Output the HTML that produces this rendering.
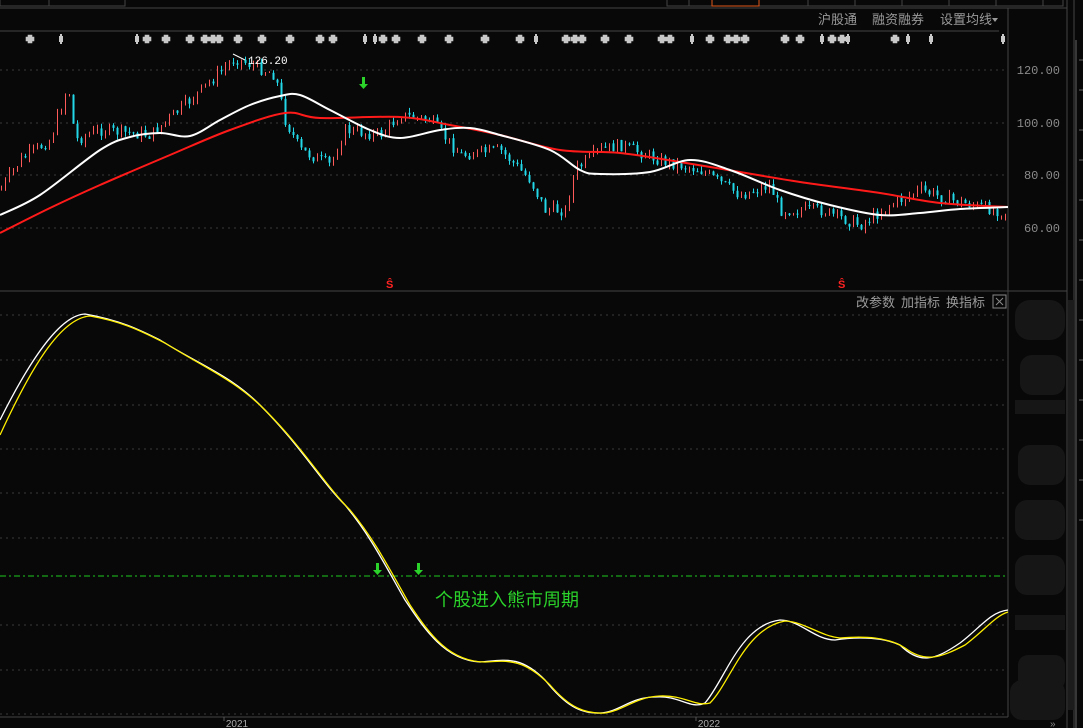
<!DOCTYPE html>
<html><head><meta charset="utf-8"><style>
body{margin:0;background:#080808;width:1083px;height:728px;overflow:hidden;font-family:"Liberation Sans","Noto Sans CJK SC",sans-serif;}
svg{display:block}
</style></head><body>
<svg id="s" width="1083" height="728" xmlns="http://www.w3.org/2000/svg">
<rect width="1083" height="728" fill="#080808"/>
<g stroke="#444" fill="none">
<line x1="0" y1="8" x2="1067" y2="8"/>
<rect x="0" y="-2" width="125" height="8"/>
<line x1="49" y1="0" x2="49" y2="6"/>
<rect x="667" y="-2" width="396" height="8"/>
<line x1="689" y1="0" x2="689" y2="6"/><line x1="808" y1="0" x2="808" y2="6"/><line x1="855" y1="0" x2="855" y2="6"/><line x1="902" y1="0" x2="902" y2="6"/><line x1="949" y1="0" x2="949" y2="6"/><line x1="996" y1="0" x2="996" y2="6"/><line x1="1043" y1="0" x2="1043" y2="6"/>
<line x1="0" y1="31" x2="999" y2="31"/>
<line x1="1008" y1="8" x2="1008" y2="717"/>
<line x1="1067" y1="0" x2="1067" y2="728"/>
<line x1="1074" y1="0" x2="1074" y2="728"/>
<line x1="0" y1="291" x2="1067" y2="291"/>
<line x1="0" y1="717" x2="1008" y2="717"/>
</g>
<rect x="712" y="-2" width="47" height="8" fill="none" stroke="#e0581a"/>
<g fill="#9a9a9a" font-size="13">
<text x="818" y="24">沪股通</text><text x="872" y="24">融资融券</text><text x="940" y="24">设置均线</text>
<text x="856" y="307">改参数</text><text x="901" y="307">加指标</text><text x="946" y="307">换指标</text>
</g>
<path d="M992 18l6 0-3 4z" fill="#9a9a9a"/>
<rect x="993" y="295" width="13" height="13" fill="none" stroke="#888"/>
<path d="M996 298l7 7M1003 298l-7 7" stroke="#888"/>
<g fill="#8a8a8a" font-family="Liberation Mono,monospace" font-size="12" text-anchor="end">
<text x="1060" y="74">120.00</text><text x="1060" y="127">100.00</text><text x="1060" y="179">80.00</text><text x="1060" y="232">60.00</text>
</g>
<g fill="#aaa" font-size="10" text-anchor="middle"><text x="237" y="727">2021</text><text x="709" y="727">2022</text></g>
<line x1="224" y1="717" x2="224" y2="721" stroke="#555"/><line x1="696" y1="717" x2="696" y2="721" stroke="#555"/>
<g stroke="#3a3a3a" stroke-dasharray="2 4">
<line x1="0" y1="70" x2="1008" y2="70"/><line x1="0" y1="123" x2="1008" y2="123"/><line x1="0" y1="175" x2="1008" y2="175"/><line x1="0" y1="228" x2="1008" y2="228"/>
<line x1="0" y1="315" x2="1008" y2="315"/><line x1="0" y1="360" x2="1008" y2="360"/><line x1="0" y1="405" x2="1008" y2="405"/><line x1="0" y1="449" x2="1008" y2="449"/><line x1="0" y1="493" x2="1008" y2="493"/><line x1="0" y1="538" x2="1008" y2="538"/><line x1="0" y1="625" x2="1008" y2="625"/><line x1="0" y1="670" x2="1008" y2="670"/><line x1="0" y1="714" x2="1008" y2="714"/>
</g>
<g id="candles"></g>
<path id="red" fill="none" stroke="#ff1a1a" stroke-width="2"/>
<path id="white" fill="none" stroke="#fff" stroke-width="2"/>
<text x="248" y="64" fill="#fff" font-family="Liberation Mono,monospace" font-size="11">126.20</text>
<path d="M233 54l12 6" stroke="#fff"/>
<path d="M362 77h3v7h3l-4.5 5-4.5-5h3z" fill="#2ad22a"/>
<text x="386" y="288" fill="#f22" font-size="11" font-weight="bold">Ŝ</text>
<text x="838" y="288" fill="#f22" font-size="11" font-weight="bold">Ŝ</text>
<g id="stars" fill="#c8c8c8"></g>
<line x1="0" y1="576" x2="1008" y2="576" stroke="#1ec81e" stroke-dasharray="6 3 2 3"/>
<path d="M376 563h3v7h3l-4.5 5-4.5-5h3z" fill="#2ad22a"/>
<path d="M417 563h3v7h3l-4.5 5-4.5-5h3z" fill="#2ad22a"/>
<text x="435" y="606" fill="#2ad22a" font-size="18">个股进入熊市周期</text>
<path fill="none" stroke="#fff" stroke-width="1.3" d="M0 420 C30 360 60 315 85 314 C120 320 140 330 160 340 C200 365 230 375 260 405 C300 445 320 480 345 505 C370 535 385 565 405 600 C425 630 445 660 480 662 C505 660 520 655 545 680 C565 705 580 714 600 713 C620 712 630 697 655 697 C680 695 690 710 705 703 C725 680 740 625 780 620 C800 620 815 640 835 640 C860 636 885 638 900 645 C920 665 935 660 960 643 C980 628 990 612 1008 610"/>
<path fill="none" stroke="#ffef00" stroke-width="1.3" d="M0 435 C30 370 60 318 90 316 C125 322 145 333 165 343 C205 368 235 380 265 410 C305 450 325 485 350 510 C375 540 390 570 410 605 C430 635 450 662 485 662 C510 660 525 660 550 685 C570 708 585 714 605 713 C625 710 635 697 660 696 C685 695 695 707 710 703 C730 683 745 628 785 621 C805 622 820 636 840 638 C865 636 888 637 905 648 C925 663 940 658 965 645 C985 630 995 616 1008 612"/>
<g fill="#161616">
<rect x="1015" y="300" width="50" height="40" rx="15"/><rect x="1020" y="355" width="45" height="40" rx="12"/><rect x="1015" y="400" width="50" height="14"/>
<rect x="1018" y="445" width="47" height="40" rx="12"/><rect x="1015" y="500" width="50" height="40" rx="12"/><rect x="1015" y="555" width="50" height="40" rx="12"/>
<rect x="1015" y="615" width="50" height="15"/><rect x="1018" y="655" width="47" height="35" rx="10"/><rect x="1010" y="680" width="55" height="40" rx="12"/>
</g>
<rect x="1068" y="300" width="6" height="410" fill="#1c1c1c"/>
<g stroke="#666" stroke-width="1">
<path d="M1076 40v690M1079 60h4M1079 90h4M1079 130h4M1079 160h4M1079 200h4M1079 240h4M1079 280h4M1079 320h4M1079 360h4M1079 400h4M1079 440h4M1079 480h4M1079 520h4"/>
</g>
<text x="1050" y="727" fill="#888" font-size="10">»</text>
</svg>
<script>
var ns='http://www.w3.org/2000/svg',g=document.getElementById('candles');
function smooth(pts){var d='M'+pts[0][0]+' '+pts[0][1];for(var i=0;i<pts.length-1;i++){var p0=pts[i-1]||pts[i],p1=pts[i],p2=pts[i+1],p3=pts[i+2]||p2;d+=' C'+(p1[0]+(p2[0]-p0[0])/6)+' '+(p1[1]+(p2[1]-p0[1])/6)+' '+(p2[0]-(p3[0]-p1[0])/6)+' '+(p2[1]-(p3[1]-p1[1])/6)+' '+p2[0]+' '+p2[1];}return d;}
document.getElementById('red').setAttribute('d',smooth([[0,233],[50,208],[100,185],[170,155],[230,130],[285,113],[320,118],[400,117],[450,125],[500,135],[560,150],[620,153],[680,162],[740,172],[800,182],[880,193],[940,203],[1008,207]]));
document.getElementById('white').setAttribute('d',smooth([[0,215],[40,195],[100,150],[130,137],[160,133],[190,136],[220,120],[250,105],[280,96],[300,95],[330,110],[370,130],[400,138],[440,130],[470,128],[500,135],[550,150],[580,170],[600,174],[650,172],[690,160],[730,170],[780,190],[830,205],[880,215],[920,213],[960,209],[1008,207]]));
var P=[[0,190],[20,160],[50,140],[68,85],[75,140],[100,130],[150,135],[190,100],[235,58],[275,75],[285,120],[300,150],[330,165],[345,130],[380,135],[400,115],[430,120],[460,155],[500,150],[530,180],[545,210],[565,210],[575,170],[600,150],[620,145],[660,160],[700,170],[740,195],[770,185],[780,210],[820,210],[860,225],[890,205],[920,190],[950,200],[1005,212]];
function py(x){for(var i=1;i<P.length;i++){if(x<=P[i][0]){var a=P[i-1],b=P[i];return a[1]+(b[1]-a[1])*(x-a[0])/(b[0]-a[0]);}}return 212;}
var seed=7;function r(){seed=(seed*9301+49297)%233280;return seed/233280;}
var prev=py(0);
for(var x=1;x<1006;x+=4){var c=py(x)+(r()-0.5)*12;var o=prev;var hi=Math.min(o,c)-r()*5,lo=Math.max(o,c)+r()*5;var up=c<o;var col=up?'#ff5a5a':'#22d8e8';
var l=document.createElementNS(ns,'line');l.setAttribute('x1',x+0.5);l.setAttribute('x2',x+0.5);l.setAttribute('y1',hi);l.setAttribute('y2',lo);l.setAttribute('stroke',col);g.appendChild(l);
if(!up){var rc=document.createElementNS(ns,'rect');rc.setAttribute('x',x-0.5);rc.setAttribute('width',2);rc.setAttribute('y',Math.min(o,c));rc.setAttribute('height',Math.max(1,Math.abs(o-c)));rc.setAttribute('fill',col);g.appendChild(rc);}prev=c;}
var st=[[30,0],[61,1],[137,1],[147,0],[166,0],[190,0],[205,0],[213,0],[219,0],[238,0],[262,0],[290,0],[320,0],[333,0],[365,1],[375,1],[383,0],[396,0],[422,0],[449,0],[485,0],[520,0],[536,1],[566,0],[575,0],[582,0],[605,0],[629,0],[662,0],[670,0],[692,1],[710,0],[728,0],[736,0],[745,0],[785,0],[800,0],[822,1],[832,0],[842,0],[848,1],[895,0],[908,1],[931,1],[1003,1]];
var sg=document.getElementById('stars');st.forEach(function(s){var e;if(s[1]==0){e=document.createElementNS(ns,'path');var x=s[0],y=39;e.setAttribute('d','M'+(x-2)+' '+(y-4)+'h4v2h2v4h-2v2h-4v-2h-2v-4h2z');e.setAttribute('stroke','#c8c8c8');e.setAttribute('stroke-width','0.6');}else{e=document.createElementNS(ns,'path');var x=s[0],y=39;e.setAttribute('d','M'+(x-1)+' '+(y-5)+'h2v2h1v6h-1v2h-2v-2h-1v-6h1z');}sg.appendChild(e);});
</script>
</body></html>
